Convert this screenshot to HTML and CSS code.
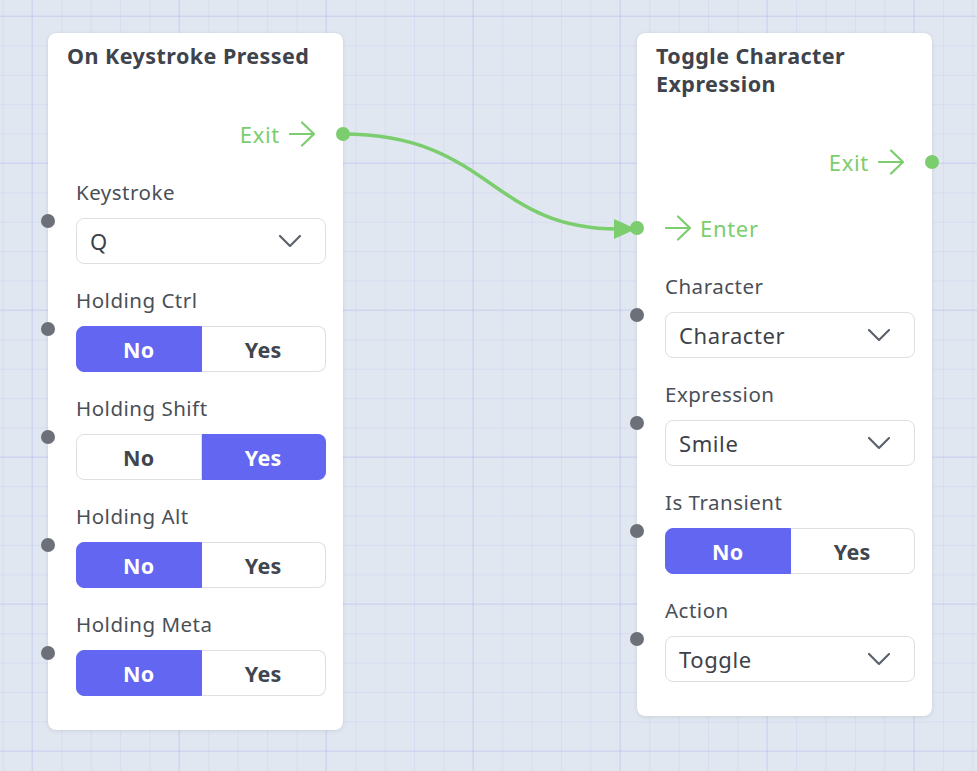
FILE: index.html
```html
<!DOCTYPE html>
<html lang="en">
<head>
<meta charset="utf-8">
<title>Flow editor</title>
<link rel="stylesheet" href="styles.css">
</head>
<body>
<div class="canvas">
  <svg class="edges" width="977" height="771" viewBox="0 0 977 771">
    <path class="edge" d="M343 134 C 490 134, 490 229, 618 229"/>
    <polygon class="edge-head" points="614,219 636,229 614,239"/>
  </svg>

  <div class="node node-keystroke">
    <div class="node-title">On Keystroke Pressed</div>
    <div class="flow-row flow-out">
      <span>Exit</span>
      <svg class="arrow" width="26" height="26" viewBox="0 0 26 26"><path d="M1 13H25M13 1.5L25 13L13 24.5"/></svg>
      <span class="dot dot-flow dot-out"></span>
    </div>
    <div class="fields">
      <div class="field">
        <span class="dot dot-in"></span>
        <div class="field-label">Keystroke</div>
        <div class="select"><span>Q</span><svg class="chev" width="22" height="12" viewBox="0 0 22 12"><path d="M1 1L11 11L21 1"/></svg></div>
      </div>
      <div class="field">
        <span class="dot dot-in"></span>
        <div class="field-label">Holding Ctrl</div>
        <div class="toggle"><span class="seg on">No</span><span class="seg">Yes</span></div>
      </div>
      <div class="field">
        <span class="dot dot-in"></span>
        <div class="field-label">Holding Shift</div>
        <div class="toggle"><span class="seg">No</span><span class="seg on">Yes</span></div>
      </div>
      <div class="field">
        <span class="dot dot-in"></span>
        <div class="field-label">Holding Alt</div>
        <div class="toggle"><span class="seg on">No</span><span class="seg">Yes</span></div>
      </div>
      <div class="field">
        <span class="dot dot-in"></span>
        <div class="field-label">Holding Meta</div>
        <div class="toggle"><span class="seg on">No</span><span class="seg">Yes</span></div>
      </div>
    </div>
  </div>

  <div class="node node-toggle">
    <div class="node-title">Toggle Character Expression</div>
    <div class="flow-row flow-out">
      <span>Exit</span>
      <svg class="arrow" width="26" height="26" viewBox="0 0 26 26"><path d="M1 13H25M13 1.5L25 13L13 24.5"/></svg>
      <span class="dot dot-flow dot-out"></span>
    </div>
    <div class="flow-row flow-in">
      <span class="dot dot-flow dot-enter"></span>
      <svg class="arrow" width="26" height="26" viewBox="0 0 26 26"><path d="M1 13H25M13 1.5L25 13L13 24.5"/></svg>
      <span>Enter</span>
    </div>
    <div class="fields">
      <div class="field">
        <span class="dot dot-in"></span>
        <div class="field-label">Character</div>
        <div class="select"><span>Character</span><svg class="chev" width="22" height="12" viewBox="0 0 22 12"><path d="M1 1L11 11L21 1"/></svg></div>
      </div>
      <div class="field">
        <span class="dot dot-in"></span>
        <div class="field-label">Expression</div>
        <div class="select"><span>Smile</span><svg class="chev" width="22" height="12" viewBox="0 0 22 12"><path d="M1 1L11 11L21 1"/></svg></div>
      </div>
      <div class="field">
        <span class="dot dot-in"></span>
        <div class="field-label">Is Transient</div>
        <div class="toggle"><span class="seg on">No</span><span class="seg">Yes</span></div>
      </div>
      <div class="field">
        <span class="dot dot-in"></span>
        <div class="field-label">Action</div>
        <div class="select"><span>Toggle</span><svg class="chev" width="22" height="12" viewBox="0 0 22 12"><path d="M1 1L11 11L21 1"/></svg></div>
      </div>
    </div>
  </div>
</div>
</body>
</html>
```

FILE: styles.css
```css
* { box-sizing: border-box; }

html, body {
  margin: 0;
  padding: 0;
}

body {
  font-family: "Noto Sans", "Open Sans", sans-serif;
  color: #40454e;
  background: #e1e7f0;
}

.canvas {
  position: relative;
  width: 977px;
  height: 771px;
  overflow: hidden;
  background-color: #e1e7f0;
  background-image:
    linear-gradient(to right, rgba(99, 102, 241, 0.13) 1.5px, transparent 1.5px),
    linear-gradient(to bottom, rgba(99, 102, 241, 0.13) 1.5px, transparent 1.5px),
    linear-gradient(to right, rgba(99, 102, 241, 0.08) 1px, transparent 1px),
    linear-gradient(to bottom, rgba(99, 102, 241, 0.08) 1px, transparent 1px);
  background-size: 147px 147px, 147px 147px, 29.4px 29.4px, 29.4px 29.4px;
  background-position: 31.5px 0, 0 15.5px, 2.6px 0, 0 16px;
}

.edges {
  position: absolute;
  left: 0;
  top: 0;
  pointer-events: none;
}

.edge {
  fill: none;
  stroke: #7bcd6d;
  stroke-width: 3.5;
  stroke-linecap: round;
}

.edge-head {
  fill: #7bcd6d;
}

.node {
  position: absolute;
  top: 33px;
  width: 295px;
  background: #ffffff;
  border-radius: 8px;
  box-shadow: 0 1px 4px rgba(30, 41, 59, 0.10), 0 0 1px rgba(30, 41, 59, 0.10);
  padding: 9px 17px 34px 28px;
  display: flex;
  flex-direction: column;
}

.node-keystroke { left: 48px; }
.node-toggle { left: 637px; }

.node-title {
  margin-left: -9px;
  font-size: 21.5px;
  line-height: 28px;
  font-weight: 700;
  letter-spacing: 0.45px;
  color: #3e434c;
}

.flow-row {
  position: relative;
  display: flex;
  align-items: center;
  gap: 9px;
  height: 28px;
  font-size: 22px;
  letter-spacing: 0.7px;
  color: #7bcd6d;
}

.flow-out {
  justify-content: flex-end;
  margin-top: 50px;
  margin-right: 11px;
}

.flow-in {
  justify-content: flex-start;
  margin-top: 38px;
}

.arrow path {
  fill: none;
  stroke: #7bcd6d;
  stroke-width: 2.2;
  stroke-linecap: round;
  stroke-linejoin: round;
}

.dot {
  position: absolute;
  width: 14px;
  height: 14px;
  border-radius: 50%;
}

.dot-flow {
  background: #7bcd6d;
  top: 7px;
}

.dot-out { right: -35px; }
.dot-enter { left: -35px; }

.fields {
  margin-top: 30px;
  display: flex;
  flex-direction: column;
  gap: 22px;
}

.field {
  position: relative;
  display: flex;
  flex-direction: column;
  gap: 12px;
}

.dot-in {
  background: #6b7079;
  left: -35px;
  top: calc(50% - 7px);
}

.field-label {
  font-size: 20.5px;
  line-height: 28px;
  letter-spacing: 0.5px;
  color: #4a4f57;
}

.select {
  height: 46px;
  border: 1px solid #dcdfe4;
  border-radius: 8px;
  background: #ffffff;
  display: flex;
  align-items: center;
  justify-content: space-between;
  padding: 0 24px 0 13px;
  font-size: 22px;
  letter-spacing: 0.6px;
  color: #3d424a;
}

.chev path {
  fill: none;
  stroke: #5d636c;
  stroke-width: 2.2;
  stroke-linecap: round;
  stroke-linejoin: round;
}

.toggle {
  height: 46px;
  display: flex;
}

.seg {
  flex: 1;
  display: flex;
  align-items: center;
  justify-content: center;
  border: 1px solid #dcdfe4;
  background: #ffffff;
  font-size: 21.5px;
  font-weight: 700;
  letter-spacing: 0.3px;
  color: #40454e;
}

.seg:first-child {
  border-radius: 8px 0 0 8px;
}

.seg + .seg {
  border-left: none;
  border-radius: 0 8px 8px 0;
}

.seg.on {
  background: #6366f1;
  border-color: #6366f1;
  color: #ffffff;
}
```
